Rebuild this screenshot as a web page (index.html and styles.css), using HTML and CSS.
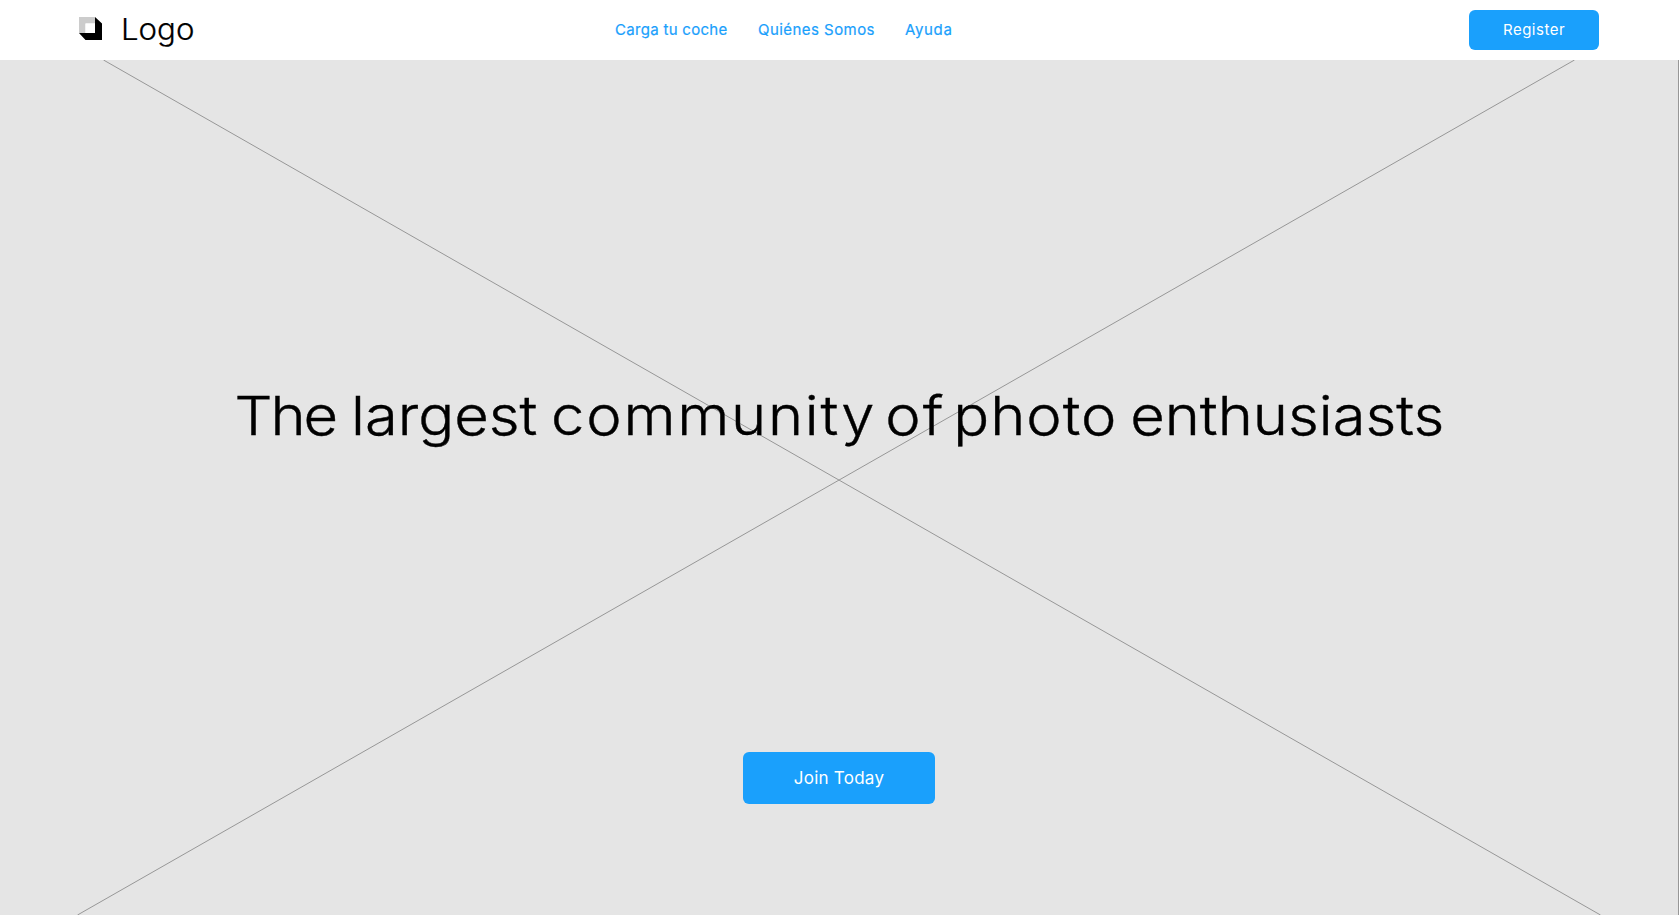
FILE: index.html
```html
<!DOCTYPE html>
<html lang="es">
<head>
<meta charset="utf-8">
<title>Logo</title>
<link rel="stylesheet" href="styles.css">
</head>
<body>
<header class="topbar">
  <a class="brand">
    <svg class="brand-mark" width="23" height="23" viewBox="0 0 23 23" aria-hidden="true">
      <path fill="#000" d="M16 0L23 6.5V23H6.5L0 16H16Z"/>
      <path fill="#ccc" d="M0 0H16V6.5H6.5V16H0Z"/>
      <path fill="#fff" d="M6.5 6.5H16V16H6.5Z"/>
    </svg>
    <span class="brand-name">Logo</span>
  </a>
  <nav class="nav">
    <a class="nav-load">Carga tu coche</a>
    <a class="nav-about">Quiénes Somos</a>
    <a class="nav-help">Ayuda</a>
  </nav>
  <button class="button register"><span>Register</span></button>
</header>
<main class="hero">
  <svg class="hero-placeholder" width="1679" height="855" viewBox="0 0 1679 855" aria-hidden="true">
    <path d="M103.5 0L1600.5 855M1574.5 0L77.5 855" stroke="#979797" fill="none"/>
  </svg>
  <h1 class="headline"><span class="word-the">The</span> <span class="word-largest">largest</span> <span class="word-community">community</span> <span class="word-of">of</span> <span class="word-photo">photo</span> <span>enthusiasts</span></h1>
  <button class="button join"><span>Join Today</span></button>
</main>
</body>
</html>
```
FILE: styles.css
```css
* {
  box-sizing: border-box;
}

body {
  margin: 0;
  height: 915px;
  overflow: hidden;
  background: #fff;
  font-family: Inter, "Open Sans", sans-serif;
}

.topbar {
  display: flex;
  align-items: center;
  height: 60px;
  padding: 0 80px 0 79px;
}

.brand {
  display: flex;
  align-items: center;
  width: 536px;
  color: #000;
}

.brand-mark {
  margin: 0 19px 3px 0;
}

.brand-name {
  padding-bottom: 2px;
  font-size: 30px;
  font-weight: 300;
  line-height: 54px;
  transform: scaleX(1.04);
  transform-origin: left;
  -webkit-text-stroke: 0.2px;
}

.nav {
  display: flex;
  gap: 31px;
  flex: 1;
  padding-bottom: 1px;
  color: #1aa0fc;
  font-size: 15px;
  font-weight: 400;
  white-space: nowrap;
  -webkit-text-stroke: 0.2px;
}

.nav-load {
  width: 112px;
  letter-spacing: 0.3px;
}

.nav-about {
  width: 116px;
  letter-spacing: 0.45px;
}

.nav-help {
  letter-spacing: 0.65px;
}

.button {
  display: flex;
  align-items: center;
  justify-content: center;
  padding: 0;
  border: 0;
  border-radius: 6px;
  background: #1aa0fc;
  color: #fff;
  font-family: inherit;
}

.register {
  width: 130px;
  height: 40px;
  padding-bottom: 1px;
  font-size: 15px;
  font-weight: 400;
  letter-spacing: 0.5px;
}

.hero {
  display: flex;
  flex-direction: column;
  align-items: center;
  position: relative;
  height: 855px;
  border-right: 1px solid #979797;
  background: #e5e5e5;
}

.hero-placeholder {
  position: absolute;
  top: 0;
  left: 0;
}

.headline {
  position: relative;
  margin: 321px 0 0;
  color: #000;
  font-size: 54px;
  font-weight: 300;
  line-height: 70px;
  transform: scaleX(1.105);
  white-space: nowrap;
  -webkit-text-stroke: 0.4px;
}

.word-the {
  margin-right: -1.8px;
  letter-spacing: -1.8px;
}

.word-largest {
  margin-right: -2.7px;
}

.word-community {
  margin-right: -7px;
  letter-spacing: 1.6px;
}

.word-of {
  margin-right: -8px;
  letter-spacing: 1.8px;
}

.word-photo {
  margin-right: -3.6px;
  letter-spacing: 0.9px;
}

.join {
  position: relative;
  width: 192px;
  height: 52px;
  margin-top: 301px;
  font-size: 17px;
  font-weight: 400;
  letter-spacing: 0.25px;
}
```
